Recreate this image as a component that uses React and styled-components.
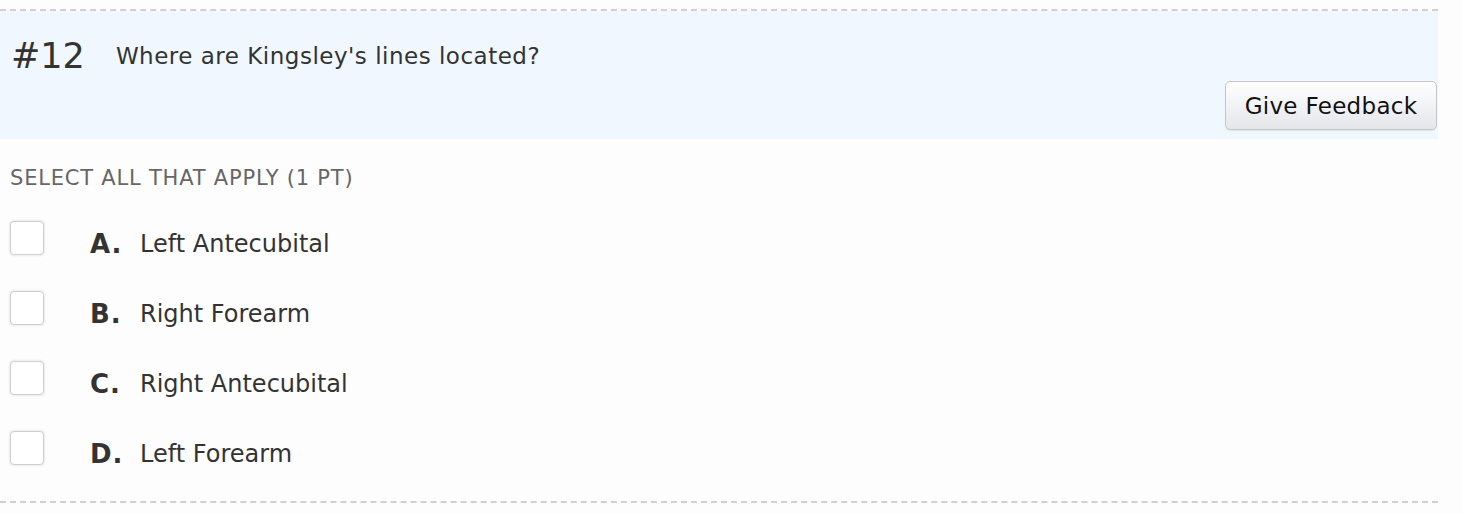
import React from 'react';
import styled, { createGlobalStyle } from 'styled-components';

const GlobalStyle = createGlobalStyle`
  body {
    margin: 0;
    background: #fdfdfd;
    font-family: 'DejaVu Sans', Verdana, sans-serif;
  }
`;

const options = [
  { letter: 'A', text: 'Left Antecubital' },
  { letter: 'B', text: 'Right Forearm' },
  { letter: 'C', text: 'Right Antecubital' },
  { letter: 'D', text: 'Left Forearm' },
];

const App = () => (
  <>
    <GlobalStyle />
    <Question>
      <Header>
        <TitleRow>
          <Number>#12</Number>
          <Prompt>Where are Kingsley's lines located?</Prompt>
        </TitleRow>
        <ButtonRow>
          <FeedbackButton type="button">Give Feedback</FeedbackButton>
        </ButtonRow>
      </Header>
      <Instructions>SELECT ALL THAT APPLY (1 PT)</Instructions>
      <OptionList>
        {options.map((o) => (
          <Option key={o.letter}>
            <Box />
            <Letter>{o.letter}.</Letter>
            <OptionText>{o.text}</OptionText>
          </Option>
        ))}
      </OptionList>
    </Question>
  </>
);

const Question = styled.div`
  width: 1438px;
  margin-top: 9px;
  border-top: 2px dashed #d0d0d0;
  border-bottom: 2px dashed #d0d0d0;
  background: #fdfdfd;
`;

const Header = styled.div`
  background: #f0f7fe;
  padding: 20px 1px 10px 11px;
  height: 128px;
  box-sizing: border-box;
  display: flex;
  flex-direction: column;
  justify-content: space-between;
`;

const TitleRow = styled.div`
  display: flex;
  align-items: center;
  gap: 31px;
`;

const Number = styled.span`
  font-size: 35px;
  color: #333;
  line-height: 50px;
`;

const Prompt = styled.span`
  font-size: 23px;
  letter-spacing: 0.5px;
  color: #333;
`;

const ButtonRow = styled.div`
  display: flex;
  justify-content: flex-end;
`;

const FeedbackButton = styled.button`
  width: 212px;
  height: 49px;
  font-family: 'DejaVu Sans', Verdana, sans-serif;
  font-size: 23px;
  letter-spacing: 0.3px;
  color: #111;
  background: linear-gradient(#ffffff, #e4e6ea);
  border: 1px solid #c5c7cb;
  border-radius: 5px;
  box-shadow: 0 1px 1px rgba(0, 0, 0, 0.08);
  padding: 0;
`;

const Instructions = styled.div`
  padding: 28px 0 0 10px;
  font-size: 21px;
  letter-spacing: 0.8px;
  color: #666;
  line-height: 22px;
`;

const OptionList = styled.div`
  display: flex;
  flex-direction: column;
  padding: 38px 0 30px 10px;
  gap: 36px;
`;

const Option = styled.label`
  display: flex;
  align-items: center;
  height: 34px;
`;

const Box = styled.span`
  width: 32px;
  height: 32px;
  border: 1px solid #cfcfcf;
  border-radius: 4px;
  background: #fff;
  box-shadow: 0 0 3px rgba(0, 0, 0, 0.15);
  margin: 0 46px 12px 0;
`;

const Letter = styled.span`
  font-size: 26px;
  font-weight: bold;
  color: #333;
  width: 50px;
  letter-spacing: 1px;
`;

const OptionText = styled.span`
  font-size: 24px;
  color: #333;
`;

export default App;
